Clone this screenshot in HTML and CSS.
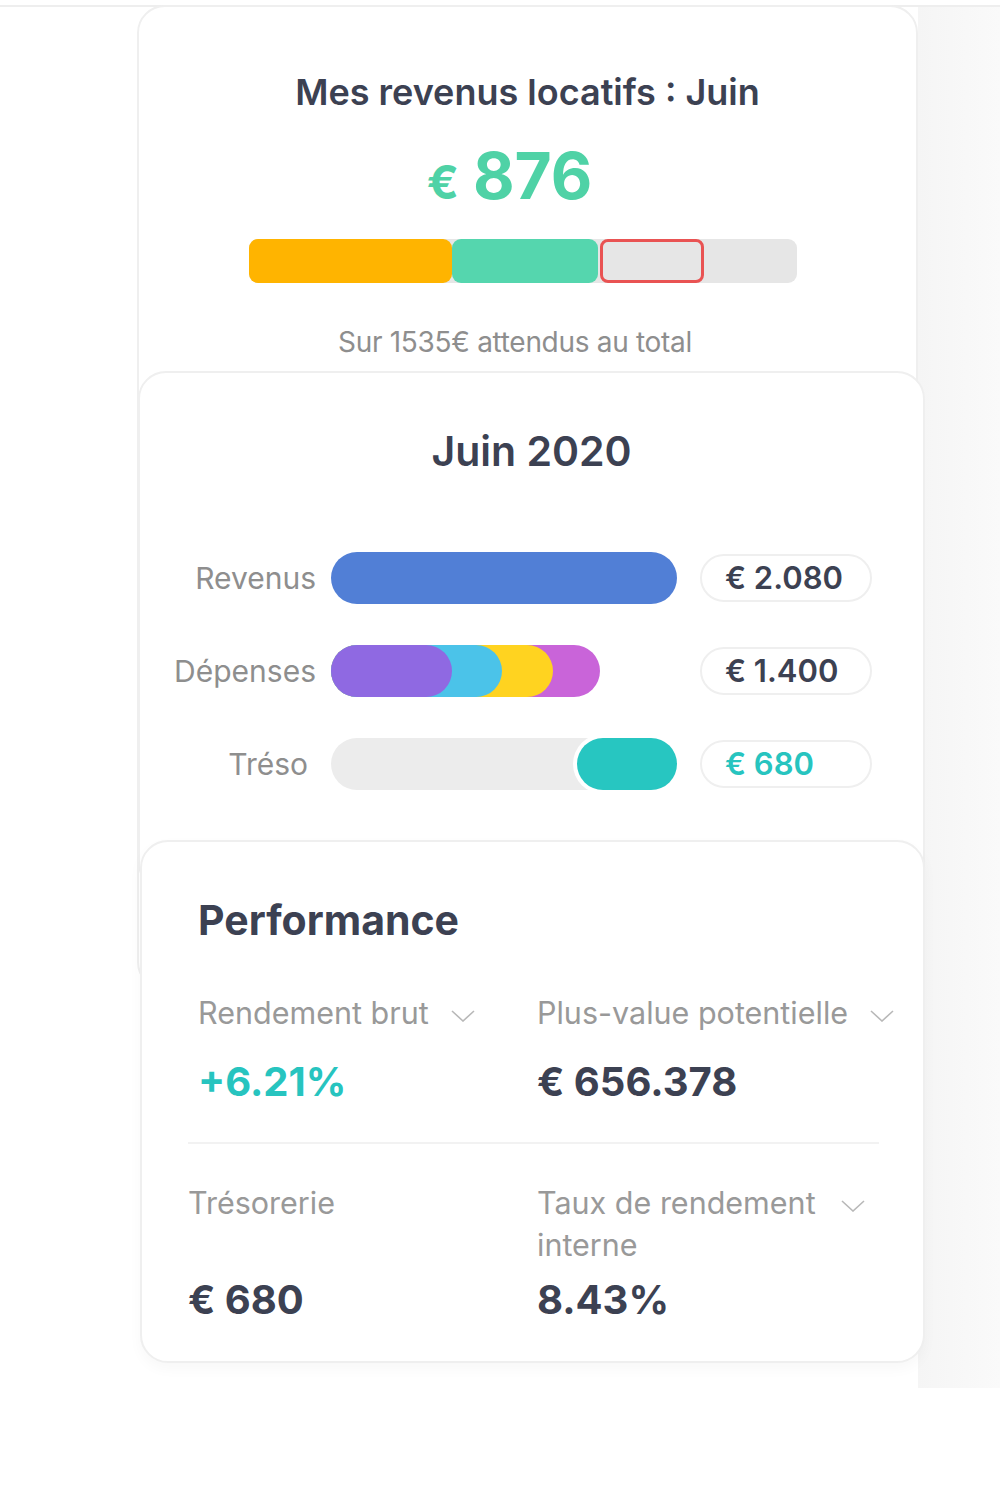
FILE: index.html
```html
<!DOCTYPE html>
<html lang="fr">
<head>
    <meta charset="UTF-8">
    <meta name="viewport" content="width=device-width, initial-scale=1.0">
    <title>Mes revenus locatifs</title>
    <link rel="stylesheet" href="styles.css">
</head>
<body>
    <div class="topbar"></div>

    <div class="page">
        <div class="stack">

            <section class="card card-income">
                <h2 class="income-title">Mes revenus locatifs : Juin</h2>
                <div class="income-amount">
                    <span class="currency">€</span><span class="amount">876</span>
                </div>
                <div class="rent-bar">
                    <div class="rent-seg seg-yellow" style="width: 203px"></div>
                    <div class="rent-seg seg-green" style="width: 146px"></div>
                    <div class="rent-seg seg-late" style="width: 104px"></div>
                </div>
                <p class="income-note">Sur 1535€ attendus au total</p>
            </section>

            <section class="card card-month">
                <h2 class="month-title">Juin 2020</h2>

                <div class="flow-rows">
                    <div class="flow-label">Revenus</div>
                    <div class="flow-bar">
                        <div class="pill pill-blue" style="width: 346px"></div>
                    </div>
                    <div class="flow-value">€ 2.080</div>

                    <div class="flow-label">Dépenses</div>
                    <div class="flow-bar">
                        <div class="pill pill-magenta" style="width: 269px"></div>
                        <div class="pill pill-yellow" style="width: 222px"></div>
                        <div class="pill pill-cyan" style="width: 171px"></div>
                        <div class="pill pill-purple" style="width: 121px"></div>
                    </div>
                    <div class="flow-value">€ 1.400</div>

                    <div class="flow-label flow-label-short">Tréso</div>
                    <div class="flow-bar">
                        <div class="pill pill-track" style="width: 346px"></div>
                        <div class="pill pill-teal" style="width: 100px"></div>
                    </div>
                    <div class="flow-value flow-value-teal">€ 680</div>
                </div>
            </section>

            <section class="card card-perf">
                <h2 class="perf-title">Performance</h2>

                <div class="perf-grid">
                    <div class="metric">
                        <div class="metric-label">
                            <span>Rendement brut</span>
                            <svg class="chevron" viewBox="0 0 24 12"><polyline points="1,1 12,11 23,1"/></svg>
                        </div>
                        <div class="metric-value metric-value-teal">+6.21%</div>
                    </div>
                    <div class="metric">
                        <div class="metric-label">
                            <span class="label-nowrap">Plus-value potentielle</span>
                            <svg class="chevron" viewBox="0 0 24 12"><polyline points="1,1 12,11 23,1"/></svg>
                        </div>
                        <div class="metric-value">€ 656.378</div>
                    </div>
                </div>

                <div class="perf-divider"></div>

                <div class="perf-grid perf-grid-bottom">
                    <div class="metric metric-shift">
                        <div class="metric-label">
                            <span>Trésorerie</span>
                        </div>
                        <div class="metric-value">€ 680</div>
                    </div>
                    <div class="metric">
                        <div class="metric-label">
                            <span class="label-wrap">Taux de rendement interne</span>
                            <svg class="chevron" viewBox="0 0 24 12"><polyline points="1,1 12,11 23,1"/></svg>
                        </div>
                        <div class="metric-value">8.43%</div>
                    </div>
                </div>
            </section>

        </div>
    </div>
</body>
</html>
```

FILE: styles.css
```css
:root {
    --text-dark: #3c4152;
    --text-grey: #8e8e8e;
    --card-border: #efefef;
    --green: #4fd2a6;
    --teal: #27c4bf;
}

body {
    margin: 0;
    font-family: "Inter", "Noto Sans", sans-serif;
    background-color: #ffffff;
    color: var(--text-dark);
}

.topbar {
    height: 5px;
    border-bottom: 2px solid #eeeeee;
}

.page {
    display: flex;
    padding-left: 137px;
    padding-bottom: 25px;
    background: linear-gradient(to right, #ffffff 918px, #f5f5f5 918px, #fafafa 1000px);
}

.stack {
    width: 788px;
}

.card {
    position: relative;
    box-sizing: border-box;
    background-color: #ffffff;
    border: 2px solid var(--card-border);
    border-radius: 28px;
}

/* revenus locatifs */
.card-income {
    width: 781px;
    height: 985px;
    margin-top: -2px;
    padding-top: 63px;
    text-align: center;
}

.income-title {
    margin: 0;
    font-size: 36px;
    line-height: 44px;
    font-weight: 600;
}

.income-amount {
    margin-top: 27px;
    padding-right: 36px;
    line-height: 70px;
    color: var(--green);
    font-weight: 700;
}

.currency {
    font-size: 47px;
    margin-right: 14px;
}

.amount {
    font-size: 64px;
}

.rent-bar {
    display: flex;
    width: 548px;
    height: 44px;
    margin: 11px 0 0 110px;
    background-color: #e6e6e6;
    border-radius: 9px;
}

.rent-seg {
    box-sizing: border-box;
    height: 100%;
    border-radius: 9px;
}

.seg-yellow {
    background-color: #ffb400;
}

.seg-green {
    background-color: #55d6ae;
}

.seg-late {
    margin-left: 2px;
    border: 3px solid #e95353;
    border-radius: 8px;
    background-color: #e6e6e6;
}

.income-note {
    margin: 43px 0 0;
    padding-right: 25px;
    font-size: 28px;
    line-height: 32px;
    letter-spacing: -0.3px;
    color: var(--text-grey);
}

/* mois */
.card-month {
    width: 787px;
    height: 520px;
    margin-top: -619px;
    margin-left: 1px;
    padding-top: 53px;
}

.month-title {
    margin: 0;
    text-align: center;
    font-size: 41px;
    line-height: 50px;
    font-weight: 600;
}

.flow-rows {
    display: grid;
    grid-template-columns: 191px 346px 195px;
    align-items: center;
    row-gap: 41px;
    margin-top: 76px;
}

.flow-label {
    padding-right: 15px;
    text-align: right;
    font-size: 30px;
    color: var(--text-grey);
}

.flow-label-short {
    padding-right: 23px;
}

.flow-bar {
    display: grid;
    height: 52px;
}

.pill {
    grid-area: 1 / 1;
    height: 52px;
    border-radius: 26px;
}

.pill-blue { background-color: #517fd6; }
.pill-purple { background-color: #8f69e2; }
.pill-cyan { background-color: #4bc3e9; }
.pill-yellow { background-color: #ffd320; }
.pill-magenta { background-color: #c964d9; }
.pill-track { background-color: #ececec; }

.pill-teal {
    justify-self: end;
    background-color: #27c6c1;
    box-shadow: 0 0 0 4px #ffffff;
}

.flow-value {
    justify-self: end;
    box-sizing: border-box;
    width: 172px;
    height: 48px;
    padding-left: 23px;
    border: 2px solid var(--card-border);
    border-radius: 26px;
    font-size: 31px;
    line-height: 44px;
    font-weight: 600;
}

.flow-value-teal {
    color: var(--teal);
}

/* performance */
.card-perf {
    width: 785px;
    margin-top: -51px;
    margin-left: 3px;
    padding: 53px 20px 36px 56px;
    box-shadow: 0 6px 14px rgba(0, 0, 0, 0.03);
}

.perf-title {
    margin: 0;
    font-size: 41px;
    line-height: 50px;
    font-weight: 700;
}

.perf-grid {
    display: grid;
    grid-template-columns: 339px 1fr;
    margin-top: 47px;
}

.metric {
    display: flex;
    flex-direction: column;
}

.metric-label {
    display: flex;
    align-items: flex-start;
    gap: 22px;
    font-size: 30.5px;
    line-height: 42px;
    color: #999999;
}

.label-nowrap {
    white-space: nowrap;
}

.label-wrap {
    width: 282px;
}

.chevron {
    flex: none;
    width: 24px;
    height: 12px;
    margin-top: 18px;
    fill: none;
    stroke: #b8b8b8;
    stroke-width: 1.6;
}

.metric-value {
    margin-top: 23px;
    font-size: 40px;
    line-height: 50px;
    font-weight: 700;
}

.metric-value-teal {
    color: var(--teal);
}

.perf-divider {
    height: 2px;
    margin: 35px 24px 0 -10px;
    background-color: #f2f2f2;
}

.perf-grid-bottom {
    margin-top: 38px;
}

.perf-grid-bottom .metric-label {
    flex: 1;
}

.perf-grid-bottom .metric-value {
    margin-top: 9px;
}

.metric-shift {
    margin-left: -10px;
}
```
